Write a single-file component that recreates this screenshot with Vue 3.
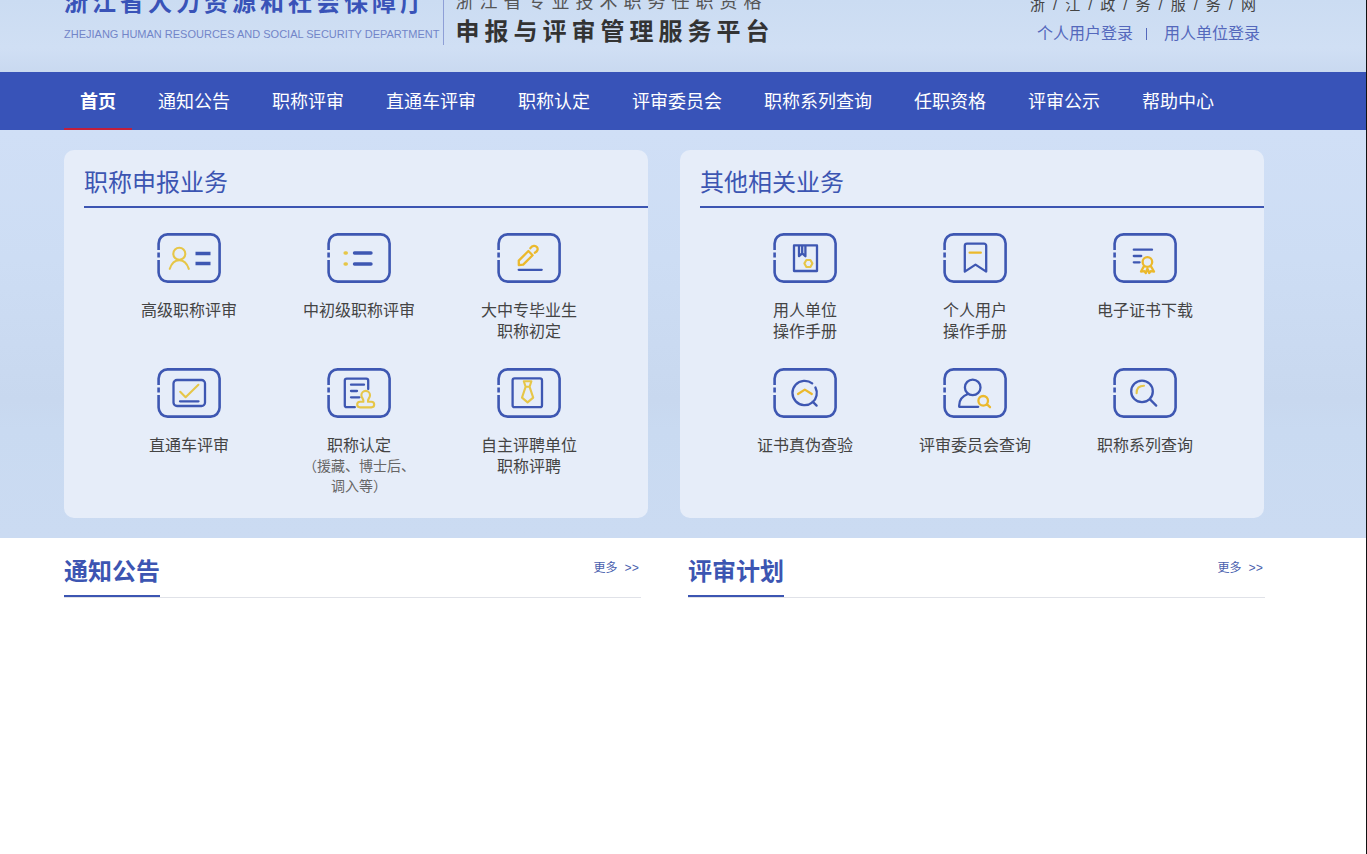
<script setup>
const navItems = [
  '首页', '通知公告', '职称评审', '直通车评审', '职称认定',
  '评审委员会', '职称系列查询', '任职资格', '评审公示', '帮助中心',
]

/* Each icon: b = blue strokes, t = thick blue strokes, y = yellow strokes */
const panels = [
  {
    title: '职称申报业务',
    items: [
      {
        lines: ['高级职称评审'],
        t: 'M38.5 20.5H53.5M38.5 30.5H53.5',
        y: 'M22.3 14.8a6 6 0 1 1 0 12a6 6 0 1 1 0-12zM12.8 35.8C14.5 30.5 18 27.3 22.3 27.3S30 30.5 31.8 35.8',
      },
      {
        lines: ['中初级职称评审'],
        t: 'M27.5 20H44M27.5 31H44',
        dots: 'M18.2 20h1M18.2 31h1',
        round: true,
      },
      {
        lines: ['大中专毕业生', '职称初定'],
        gold: true,
        b: 'M21.7 36.8H44.7',
        y: 'M21.8 32.2V27.6L31.4 18L35.6 22.2L26.2 31.6ZM33.4 15.2C35.4 12.4 38.4 12.2 40 14.2C41.4 16.2 40.4 18.4 37.8 19.8',
      },
      {
        lines: ['直通车评审'],
        b: 'M20 12H44.5a3.5 3.5 0 0 1 3.5 3.5V34.5a3.5 3.5 0 0 1-3.5 3.5H20a3.5 3.5 0 0 1-3.5-3.5V15.5a3.5 3.5 0 0 1 3.5-3.5zM23 33.3H41.5',
        y: 'M23.2 23.8L28.6 29.2L41.4 16.8',
      },
      {
        lines: ['职称认定'],
        notes: ['（援藏、博士后、', '调入等）'],
        b: 'M41.2 21V12.6a2 2 0 0 0-2-2H19.8a2 2 0 0 0-2 2V37.2a2 2 0 0 0 2 2H27.8M24 16.7H37M24 23H30M24 29.3H32.4',
        y: 'M36.4 33.8C37.2 31.6 34.4 29.8 34.4 27.2a4.3 4.3 0 0 1 8.6 0C43 29.8 40.2 31.6 41 33.8H44.4a2.8 2.8 0 0 1 0 5.6H33a2.8 2.8 0 0 1 0-5.6z',
      },
      {
        lines: ['自主评聘单位', '职称评聘'],
        b: 'M17.6 10.4H43a2 2 0 0 1 2 2V37.2a2 2 0 0 1-2 2H17.6a2 2 0 0 1-2-2V12.4a2 2 0 0 1 2-2z',
        y: 'M26.8 13.2H34.4L32.6 18.8H28.6ZM28.6 18.8L25 29.6L30.6 34.4L36.2 29.6L32.6 18.8',
      },
    ],
  },
  {
    title: '其他相关业务',
    items: [
      {
        lines: ['用人单位', '操作手册'],
        b: 'M21 12.4H44V38H21ZM26 12.4V23.2L29.2 20.4L32.4 23.2V12.4M29.2 13V20',
        y: 'M33.4 27H37.4L39.4 30.4L37.4 34H33.4L31.4 30.4Z',
      },
      {
        lines: ['个人用户', '操作手册'],
        gold: true,
        b: 'M24 10.6H41a2.2 2.2 0 0 1 2.2 2.2V38.6L32.5 31.6L21.8 38.6V12.8a2.2 2.2 0 0 1 2.2-2.2z',
        y: 'M26.6 19.7H37.8',
      },
      {
        lines: ['电子证书下载'],
        gold: true,
        b: 'M20.8 16.7H39M20.8 23H28.2M20.8 29.3H26.6',
        y: 'M34.4 24.2a4.8 4.8 0 1 1 0 9.6a4.8 4.8 0 1 1 0-9.6zM31 33L28 38.6L31.4 38.2L32.8 40L34.4 35.6L36.2 40L37.6 38.2L41 38.6L37.8 33',
      },
      {
        lines: ['证书真伪查验'],
        gold: true,
        b: 'M39.2 15.4A12.2 12.2 0 1 0 39.4 34.4M39.4 34.4A12.2 12.2 0 0 0 42.4 19.4M39.6 33.6L43.6 37.6',
        y: 'M25 26L31.8 21.6L38.8 26',
      },
      {
        lines: ['评审委员会查询'],
        gold: true,
        b: 'M29.7 11.6a7.8 7.8 0 1 1 0 15.6a7.8 7.8 0 1 1 0-15.6zM25 26C19.6 28 16.2 32 16.2 37.4V38.8H35.2',
        y: 'M40.2 28a4.8 4.8 0 1 1 0 9.6a4.8 4.8 0 1 1 0-9.6zM43.8 36.2L47 39.2',
      },
      {
        lines: ['职称系列查询'],
        b: 'M29 12.6a10.8 10.8 0 1 1 0 21.6a10.8 10.8 0 1 1 0-21.6zM37 31.4L43.2 37.6',
        y: 'M23.6 25.2C23.6 20.6 26.4 17.8 31 17.8',
      },
    ],
  },
]

const sections = ['通知公告', '评审计划']
</script>

<template>
  <div class="page">
    <div class="backdrop">
      <header class="header">
        <div class="dept">
          <div class="dept-cn">浙江省人力资源和社会保障厅</div>
          <div class="dept-en">ZHEJIANG HUMAN RESOURCES AND SOCIAL SECURITY DEPARTMENT</div>
        </div>
        <div class="platform">
          <div class="platform-sub">浙江省专业技术职务任职资格</div>
          <h1 class="platform-name">申报与评审管理服务平台</h1>
        </div>
        <div class="account">
          <a class="gov" href="#">浙/江/政/务/服/务/网</a>
          <div class="logins">
            <a href="#">个人用户登录</a>
            <span class="bar"></span>
            <a href="#">用人单位登录</a>
          </div>
        </div>
      </header>

      <nav class="nav">
        <a
          v-for="(item, i) in navItems"
          :key="item"
          href="#"
          class="nav-item"
          :class="{ active: i === 0 }"
        >{{ item }}</a>
      </nav>

      <main class="panels">
        <section v-for="panel in panels" :key="panel.title" class="panel">
          <h2 class="panel-title">{{ panel.title }}</h2>
          <div class="grid">
            <a v-for="item in panel.items" :key="item.lines[0]" href="#" class="service">
              <svg class="icon" viewBox="0 0 64 50" fill="none" aria-hidden="true">
                <path
                  class="frame"
                  d="M1.6 17V10.4a9 9 0 0 1 9-9H53.6a9 9 0 0 1 9 9V39.6a9 9 0 0 1-9 9H10.6a9 9 0 0 1-9-9V27M1.6 19.4V24.4"
                />
                <path v-if="item.b" class="blue" :d="item.b" />
                <path v-if="item.t" class="thick" :class="{ round: item.round }" :d="item.t" />
                <path v-if="item.y" class="yellow" :class="{ gold: item.gold }" :d="item.y" />
                <path v-if="item.dots" class="dots" :d="item.dots" />
              </svg>
              <span v-for="line in item.lines" :key="line" class="label">{{ line }}</span>
              <span v-for="note in item.notes" :key="note" class="note">{{ note }}</span>
            </a>
          </div>
        </section>
      </main>
    </div>

    <div class="sections">
      <section v-for="name in sections" :key="name" class="section-head">
        <h2 class="section-title">{{ name }}</h2>
        <a class="more" href="#">更多 &gt;&gt;</a>
      </section>
    </div>
  </div>
</template>

<style>
body {
  margin: 0;
  background: #fff;
}
</style>

<style scoped>
.page {
  box-sizing: border-box;
  min-height: 100vh;
  border-right: 1px solid #111;
  background: #fff;
  font-family: "Liberation Sans", "Noto Sans CJK SC", sans-serif;
  color: #444;
}

a {
  color: inherit;
  text-decoration: none;
}

h1,
h2 {
  margin: 0;
}

.backdrop {
  background: linear-gradient(180deg, #cbdcf2 0, #d0dff4 48px, #c9d9f0 72px, #d0dff6 130px, #cdddf4 260px, #c8d8ef 400px, #c9daf1 430px, #cbdbf2 100%);
}

.header {
  display: flex;
  align-items: flex-end;
  height: 72px;
  box-sizing: border-box;
  padding: 0 102px 27px 64px;
  overflow: hidden;
  white-space: nowrap;
}

.dept {
  padding-right: 4px;
  border-right: 1px solid #8e9fd6;
}

.dept-cn {
  font-size: 24px;
  line-height: 32px;
  font-weight: 700;
  letter-spacing: 4px;
  color: #3953b8;
}

.dept-en {
  padding: 7px 0 3px;
  font-size: 11px;
  line-height: 16px;
  color: #7285c8;
}

.platform {
  padding-left: 11px;
  color: #333;
}

.platform-sub {
  padding-bottom: 6px;
  font-size: 18px;
  line-height: 24px;
  letter-spacing: 6px;
  color: #555;
}

.platform-name {
  padding-bottom: 1px;
  font-size: 24px;
  line-height: 24px;
  font-weight: 700;
  letter-spacing: 5px;
}

.account {
  margin-left: auto;
}

.gov {
  display: block;
  font-size: 15px;
  line-height: 20px;
  letter-spacing: 8px;
  color: #444;
}

.logins {
  display: flex;
  align-items: center;
  justify-content: flex-end;
  padding: 8px 4px 0 0;
  font-size: 16px;
  line-height: 22px;
  color: #5468bc;
}

.bar {
  width: 1px;
  height: 12px;
  margin: 0 17px 0 13px;
  background: #5468bc;
}

.nav {
  display: flex;
  gap: 10px;
  height: 58px;
  padding-left: 64px;
  background: #3853b8;
  white-space: nowrap;
}

.nav-item {
  box-sizing: border-box;
  height: 58px;
  padding: 0 16px;
  font-size: 18px;
  line-height: 60px;
  color: #fff;
}

.nav-item.active {
  border-bottom: 2px solid #c21f3c;
  font-weight: 700;
}

.panels {
  display: grid;
  grid-template-columns: 1fr 1fr;
  gap: 32px;
  padding: 20px 102px 20px 64px;
}

.panel {
  min-height: 368px;
  border-radius: 10px;
  background: #e6edf9;
}

.panel-title {
  margin-left: 20px;
  padding: 16px 0 6px;
  border-bottom: 2px solid #3c55b2;
  font-size: 24px;
  line-height: 34px;
  font-weight: 400;
  color: #3c55b2;
}

.grid {
  display: grid;
  grid-template-columns: repeat(3, 1fr);
  grid-auto-rows: 135px;
  padding: 25px 34px 0 40px;
}

.service {
  display: flex;
  flex-direction: column;
  align-items: center;
  white-space: nowrap;
}

.icon {
  width: 64px;
  height: 50px;
  margin-bottom: 17px;
}

.label {
  font-size: 16px;
  line-height: 21px;
}

.note {
  font-size: 14px;
  line-height: 20px;
  color: #666;
}

.frame {
  stroke: #3e57b2;
  stroke-width: 2.6;
}

.blue {
  stroke: #3e57b2;
  stroke-width: 2.3;
  stroke-linecap: round;
  stroke-linejoin: round;
}

.thick {
  stroke: #3e57b2;
  stroke-width: 3.4;
}

.round {
  stroke-linecap: round;
}

.yellow {
  stroke: #e6c648;
  stroke-width: 2.1;
  stroke-linecap: round;
  stroke-linejoin: round;
}

.yellow.gold {
  stroke: #ebb92c;
  stroke-width: 2.3;
}

.dots {
  stroke: #e6c648;
  stroke-width: 3.6;
  stroke-linecap: round;
}

.sections {
  display: grid;
  grid-template-columns: 1fr 1fr;
  gap: 47px;
  padding: 16px 101px 0 64px;
}

.section-head {
  display: flex;
  align-items: flex-start;
  justify-content: space-between;
  border-bottom: 1px solid #e0e2e8;
}

.section-title {
  padding-bottom: 5px;
  border-bottom: 2px solid #3c55b2;
  font-size: 24px;
  line-height: 36px;
  color: #3c55b2;
}

.more {
  padding: 6px 2px 0 0;
  font-family: "Liberation Mono", "Noto Sans CJK SC", monospace;
  font-size: 12px;
  line-height: 18px;
  color: #4a5fae;
}
</style>
